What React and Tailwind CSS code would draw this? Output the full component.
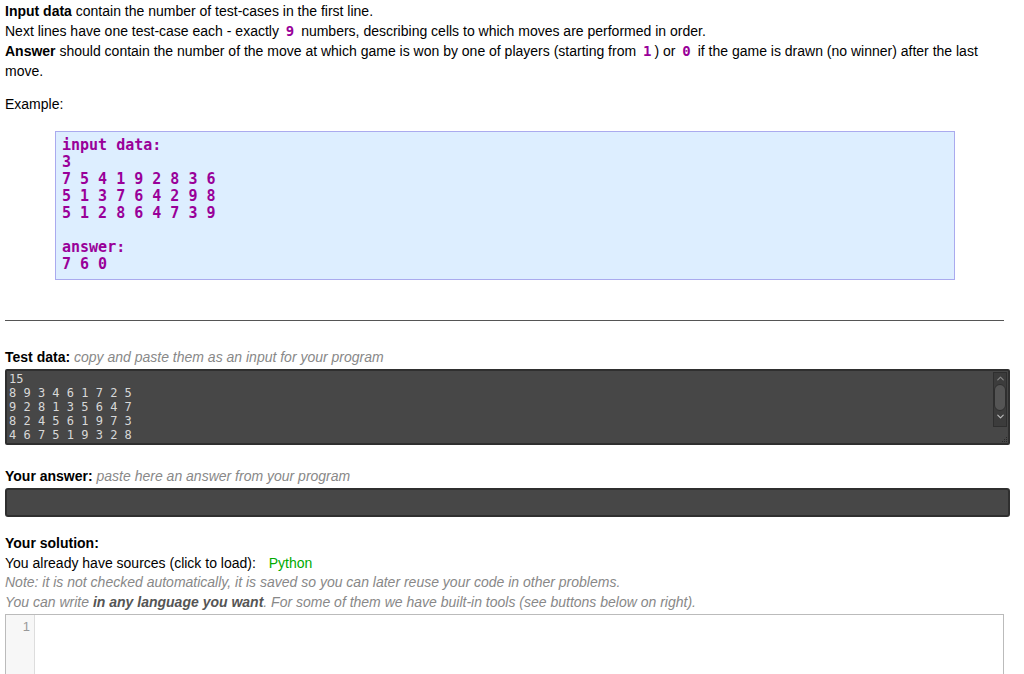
import { ChevronUp, ChevronDown } from 'lucide-react'

const ejemplo = [
  'input data:',
  '3',
  '7 5 4 1 9 2 8 3 6',
  '5 1 3 7 6 4 2 9 8',
  '5 1 2 8 6 4 7 3 9',
  '',
  'answer:',
  '7 6 0',
]

const datosPrueba = [
  '15',
  '8 9 3 4 6 1 7 2 5',
  '9 2 8 1 3 5 6 4 7',
  '8 2 4 5 6 1 9 7 3',
  '4 6 7 5 1 9 3 2 8',
]

const Mono = ({ children }) => (
  <span className="px-[3px] font-['DejaVu_Sans_Mono',monospace] font-bold text-[#990099] text-[14px] leading-none">{children}</span>
)

export default function App() {
  return (
    <div className="h-[674px] overflow-hidden bg-white px-[5px] font-['Liberation_Sans',Arial,sans-serif] text-[14px] leading-[20px] text-black">
      {/* Enunciado */}
      <p className="pt-px">
        <b>Input data</b> contain the number of test-cases in the first line.
      </p>
      <p>
        Next lines have one test-case each - exactly <Mono>9</Mono> numbers, describing cells to which moves are performed in order.
      </p>
      <p>
        <b>Answer</b> should contain the number of the move at which game is won by one of players (starting from <Mono>1</Mono>) or <Mono>0</Mono> if the game is drawn (no winner) after the last
      </p>
      <p>move.</p>

      <p className="mt-[13px]">Example:</p>

      <div className="ml-[50px] mr-[64px] mt-[17px] border border-[#aaaaee] bg-[#ddeeff] px-[6px] pt-[5px] pb-[6px] font-['DejaVu_Sans_Mono',monospace] text-[15px] font-bold leading-[17px] text-[#990099] whitespace-pre">
        {ejemplo.map((l, i) => (
          <div key={i} className="h-[17px]">{l}</div>
        ))}
      </div>

      <hr className="mt-[40px] mr-[15px] border-t border-[#555]" />

      {/* Datos de prueba */}
      <p className="mt-[26px]">
        <b>Test data:</b> <i className="text-[#888]">copy and paste them as an input for your program</i>
      </p>
      <div className="relative mt-[2px] mr-[9px] h-[76px] rounded-[2px] border-2 border-[#2f2f2f] bg-[#474747] px-[2px] pt-px font-['DejaVu_Sans_Mono',monospace] text-[12px] leading-[14px] text-[#d8d8d8] whitespace-pre">
        {datosPrueba.map((l, i) => (
          <div key={i}>{l}</div>
        ))}
        <div className="absolute right-[1px] top-[1px] flex h-[55px] w-[14px] flex-col items-center border border-[#2f2f2f] bg-[#3c3c3c]">
          <ChevronUp size={11} className="text-[#888]" strokeWidth={2.5} />
          <div className="h-[27px] w-[12px] rounded-[6px] border border-[#2f2f2f] bg-[#555]" />
          <ChevronDown size={11} className="text-[#bbb]" strokeWidth={2.5} />
        </div>
        <div className="absolute bottom-[1px] right-[1px] grid grid-cols-3 gap-px">
          <span />
          <span />
          <span className="h-px w-px bg-[#2a2a2a]" />
          <span />
          <span className="h-px w-px bg-[#2a2a2a]" />
          <span className="h-px w-px bg-[#2a2a2a]" />
          <span className="h-px w-px bg-[#2a2a2a]" />
          <span className="h-px w-px bg-[#2a2a2a]" />
          <span className="h-px w-px bg-[#2a2a2a]" />
        </div>
      </div>

      {/* Respuesta */}
      <p className="mt-[21px]">
        <b>Your answer:</b> <i className="text-[#888]">paste here an answer from your program</i>
      </p>
      <div className="mt-[2px] mr-[9px] h-[29px] rounded-[3px] border-2 border-[#2f2f2f] bg-[#474747]" />

      {/* Solucion */}
      <p className="mt-[16px] font-bold">Your solution:</p>
      <p>
        You already have sources (click to load): <span className="ml-[9px] text-[#00aa00]">Python</span>
      </p>
      <p className="-mt-px italic text-[#888]">Note: it is not checked automatically, it is saved so you can later reuse your code in other problems.</p>
      <p className="italic text-[#888]">
        You can write <b className="text-[#555]">in any language you want</b>. For some of them we have built-in tools (see buttons below on right).
      </p>
      <div className="mt-[2px] mr-[15px] flex h-[80px] border border-[#bbb]">
        <div className="w-[29px] border-r border-[#ddd] bg-[#f7f7f7] pr-[4px] pt-[3px] text-right text-[13px] leading-[17px] text-[#999]">1</div>
        <div className="flex-1 bg-white" />
      </div>
    </div>
  )
}
